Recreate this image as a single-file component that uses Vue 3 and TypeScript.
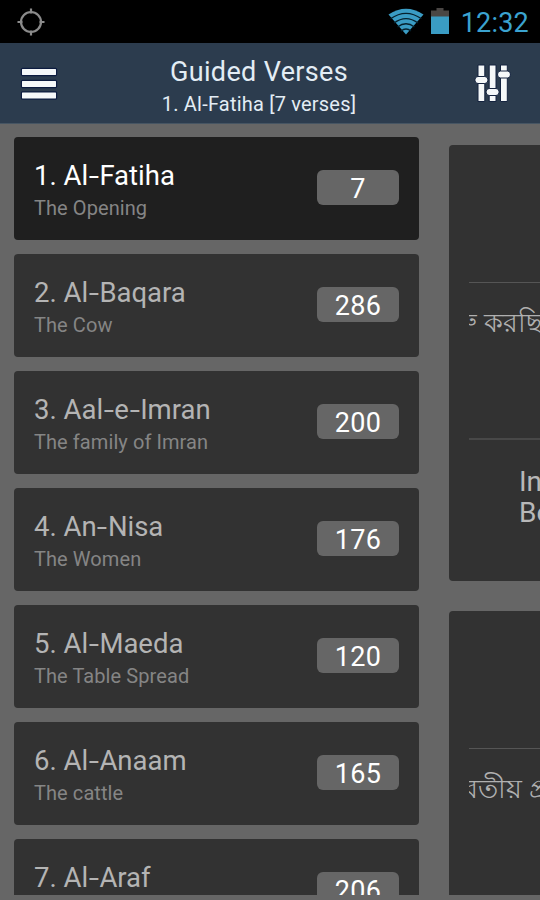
<script setup lang="ts">
interface Chapter {
  id: number
  name: string
  meaning: string
  verses: number
}

const chapters: Chapter[] = [
  { id: 1, name: 'Al-Fatiha', meaning: 'The Opening', verses: 7 },
  { id: 2, name: 'Al-Baqara', meaning: 'The Cow', verses: 286 },
  { id: 3, name: 'Aal-e-Imran', meaning: 'The family of Imran', verses: 200 },
  { id: 4, name: 'An-Nisa', meaning: 'The Women', verses: 176 },
  { id: 5, name: 'Al-Maeda', meaning: 'The Table Spread', verses: 120 },
  { id: 6, name: 'Al-Anaam', meaning: 'The cattle', verses: 165 },
  { id: 7, name: 'Al-Araf', meaning: '', verses: 206 },
]
const selected = 1
const pieces = (name: string): string[] => name.split(/(-)/)
</script>

<template>
  <div class="screen">
    <div class="status">
      <svg class="gps" width="28" height="28" viewBox="0 0 28 28">
        <circle cx="14" cy="14" r="10" />
        <path d="M14 .5v5M14 22.500v5M.5 14h5M22.500 14h5" />
      </svg>
      <div class="tray">
        <svg class="wifi" width="36" height="27" viewBox="0 0 36 27">
          <path class="fan" d="M.5 6.500Q18-5 35.500 6.500L18 26.500Z" />
          <path class="gap" d="M2.500 10.800Q18-.2 33.500 10.800M6 15Q18 6.200 30 15M9.500 19Q18 12.500 26.500 19M13 23Q18 19 23 23" />
        </svg>
        <svg class="battery" width="18" height="27" viewBox="0 0 18 27">
          <path fill="#4a4644" d="M5.500 0h7v2.500H18V9H0V2.500h5.500z" />
          <path fill="#3a9cc4" d="M0 8.500h18V26H0z" />
        </svg>
        <span class="clock">12:32</span>
      </div>
    </div>

    <header class="bar">
      <svg class="menu" width="40" height="36" viewBox="0 0 40 36">
        <g stroke="#0d1c40" stroke-width="1.200" fill="#f5f8f9">
          <rect x="2.400" y="1.400" width="35.200" height="7.200" rx="1" />
          <rect x="2.400" y="13.400" width="35.200" height="7.200" rx="1" />
          <rect x="2.400" y="24.900" width="35.200" height="7.200" rx="1" />
        </g>
      </svg>
      <div class="titles">
        <h1>Guided Verses</h1>
        <p>1. Al-Fatiha [7 verses]</p>
      </div>
      <svg class="sliders" width="38" height="40" viewBox="0 0 38 40">
        <g stroke="#14233f" stroke-width="1" fill="#f5f8f9">
          <path d="M5 2h6.800v36.500H5zM16.200 2H23v36.500h-6.800zM27.500 2h6.800v36.500h-6.800z" />
          <rect x="2" y="13.500" width="12.800" height="7" rx="3" />
          <rect x="13.200" y="25.500" width="12.800" height="7" rx="3" />
          <rect x="24.600" y="8" width="12.800" height="7" rx="3" />
        </g>
      </svg>
    </header>

    <main class="body">
      <ul class="list">
        <li v-for="c in chapters" :key="c.id" class="card" :class="{ active: c.id === selected }">
          <div class="label">
            <span class="name">{{ c.id }}. <span v-for="(part, i) in pieces(c.name)" :key="i" :class="{ hyphen: part === '-' }">{{ part }}</span></span>
            <span class="meaning">{{ c.meaning }}</span>
          </div>
          <span class="count">{{ c.verses }}</span>
        </li>
      </ul>
      <div class="verses">
        <article class="verse">
          <div class="arabic"></div>
          <div class="bangla first"><span>শুরু করছি</span></div>
          <div class="english">In<br />Be</div>
        </article>
        <article class="verse next">
          <div class="arabic"></div>
          <div class="bangla second"><span>যাবতীয় প্র</span></div>
        </article>
      </div>
    </main>
  </div>
</template>

<style>
body {
  margin: 0;
  background: #666;
}
</style>

<style scoped>
.screen {
  width: 540px;
  height: 900px;
  overflow: hidden;
  display: flex;
  flex-direction: column;
  background: #666;
  font-family: Roboto, "Noto Sans", sans-serif;
}
.status {
  height: 43px;
  flex: none;
  box-sizing: border-box;
  background: #000;
  display: flex;
  justify-content: space-between;
  padding: 8px 11px 0 17px;
}
.gps {
  fill: none;
  stroke: #8b8b8b;
  stroke-width: 2.2;
}
.tray {
  display: flex;
}
.wifi {
  margin-right: 7px;
}
.fan {
  fill: #3a9cc4;
}
.gap {
  fill: none;
  stroke: #06212d;
  stroke-width: 1.3;
}
.battery {
  margin-right: 12px;
}
.clock {
  font-size: 27px;
  line-height: 30px;
  letter-spacing: 0.2px;
  color: #3ba3d0;
}
.bar {
  height: 81px;
  flex: none;
  box-sizing: border-box;
  background: #2c3c4e;
  border-bottom: 1px solid #465563;
  display: flex;
  padding: 0 0 0 19px;
}
.menu {
  margin-top: 24px;
}
.sliders {
  margin-top: 20px;
}
.titles {
  width: 400px;
  margin-right: 14px;
  text-align: center;
  color: #e3edf5;
}
h1 {
  margin: 12px 0 0;
  font-size: 27px;
  line-height: 34px;
  font-weight: 400;
  letter-spacing: 0.35px;
}
p {
  margin: 3px 0 0;
  font-size: 20px;
  line-height: 24px;
  letter-spacing: 0.2px;
}
.body {
  height: 771px;
  flex: none;
  overflow: hidden;
  display: flex;
  box-sizing: border-box;
  padding: 13px 0 0 14px;
}
.list {
  list-style: none;
  margin: 0;
  padding: 0;
  width: 405px;
  flex: none;
  display: flex;
  flex-direction: column;
  gap: 14px;
}
.card {
  height: 103px;
  flex: none;
  box-sizing: border-box;
  padding: 0 20px;
  background: #323232;
  border-radius: 4px;
  display: flex;
  justify-content: space-between;
  align-items: flex-start;
}
.card.active {
  background: #1f1f1f;
}
.label {
  display: flex;
  flex-direction: column;
  padding-top: 22px;
}
.name {
  font-size: 27.5px;
  line-height: 34px;
  color: #b4b4b4;
}
.hyphen {
  display: inline-block;
  margin: 0 1.8px;
  transform: scaleX(1.35);
}
.active .name {
  color: #fff;
}
.meaning {
  font-size: 20px;
  line-height: 30px;
  letter-spacing: 0.08px;
  color: #858585;
}
.count {
  width: 82px;
  height: 35px;
  margin-top: 33px;
  border-radius: 6px;
  background: #666;
  color: #fff;
  font-size: 27px;
  line-height: 38px;
  text-align: center;
  letter-spacing: 0.3px;
}
.verses {
  flex: none;
  width: 91px;
  margin-left: 30px;
  padding-top: 8px;
  display: flex;
  flex-direction: column;
  gap: 30px;
}
.verse {
  height: 436px;
  flex: none;
  box-sizing: border-box;
  background: #323232;
  border-radius: 4px 0 0 4px;
  padding-left: 20px;
  overflow: hidden;
}
.arabic {
  height: 137px;
  border-bottom: 1px solid #555;
}
.bangla {
  height: 157px;
  overflow: hidden;
  white-space: nowrap;
  box-sizing: border-box;
  border-bottom: 2px solid #484848;
  color: #b0b0b0;
  font-size: 27px;
  line-height: 36px;
  padding-top: 22px;
}
.first span {
  margin-left: -36px;
}
.second span {
  margin-left: -30px;
}
.english {
  padding: 26px 0 0 50px;
  color: #b8b8b8;
  font-size: 28px;
  line-height: 31px;
}
</style>
